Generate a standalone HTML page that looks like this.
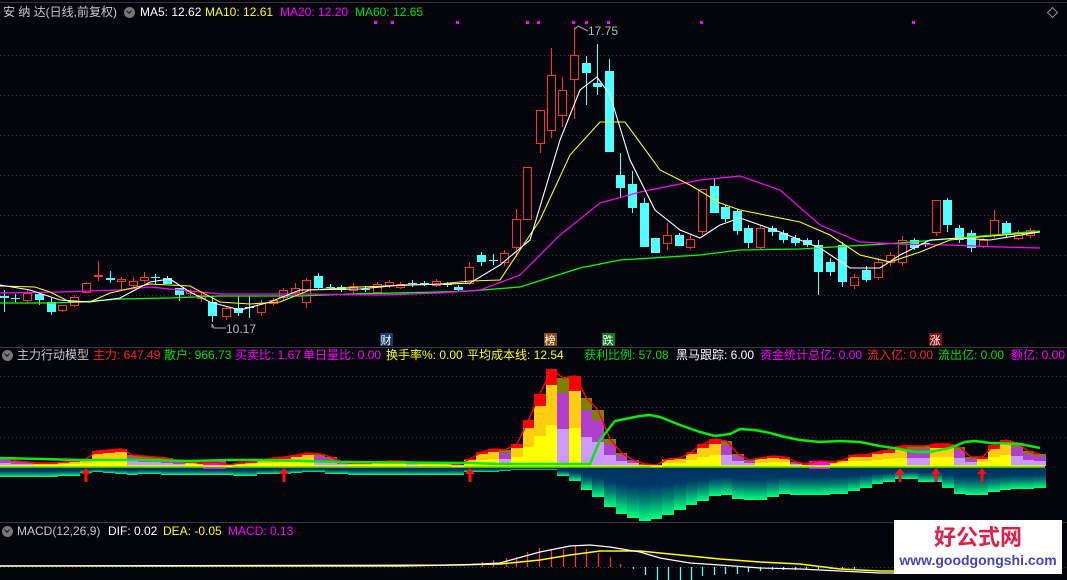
<!DOCTYPE html>
<html><head><meta charset="utf-8">
<style>
html,body{margin:0;padding:0;background:#04040d;}
#w{position:relative;width:1067px;height:580px;overflow:hidden;background:#04040d;font-family:"Liberation Sans","Noto Sans CJK SC",sans-serif;font-size:12px;}
.t{position:absolute;white-space:nowrap;line-height:14px;}
.ci{position:absolute;width:11px;height:11px;border-radius:50%;background:#777;}
.ci:after{content:"";position:absolute;left:3px;top:2px;width:3px;height:3px;border-right:1.5px solid #111;border-bottom:1.5px solid #111;transform:rotate(45deg);}
svg{position:absolute;left:0;top:0;}
</style></head><body><div id="w">
<svg id="s" width="1067" height="580" xmlns="http://www.w3.org/2000/svg">
<defs>
<linearGradient id="ng" x1="0" y1="0" x2="0" y2="1">
<stop offset="0" stop-color="#003060"/><stop offset="0.35" stop-color="#003a66"/><stop offset="0.6" stop-color="#007a70"/><stop offset="0.85" stop-color="#00d078"/><stop offset="1" stop-color="#00ff80"/>
</linearGradient>
</defs>
<g id="g"></g>
</svg>
<div class="t" style="left:3px;top:5px;color:#c8c8c8">安 纳 达(日线,前复权)</div>
<div class="ci" style="left:124px;top:7px"></div>
<div class="t" style="left:140px;top:5px;color:#fff">MA5: 12.62</div>
<div class="t" style="left:205px;top:5px;color:#ffff00">MA10: 12.61</div>
<div class="t" style="left:280px;top:5px;color:#ff00ff">MA20: 12.20</div>
<div class="t" style="left:355px;top:5px;color:#00e000">MA60: 12.65</div>
<div class="t" style="left:588px;top:24px;color:#b8b8b8">17.75</div>
<div class="t" style="left:226px;top:322px;color:#b8b8b8">10.17</div>

<div class="ci" style="left:2px;top:350px"></div>
<div class="t" style="left:17px;top:348px;color:#c8c8c8">主力行动模型</div>
<div class="t" style="left:93px;top:348px;color:#ff2020">主力: 647.49</div>
<div class="t" style="left:164px;top:348px;color:#00e000">散户: 966.73</div>
<div class="t" style="left:235px;top:348px;color:#ff00ff">买卖比: 1.67</div>
<div class="t" style="left:303px;top:348px;color:#ff00ff">单日量比: 0.00</div>
<div class="t" style="left:386px;top:348px;color:#ffff00">换手率%: 0.00</div>
<div class="t" style="left:467px;top:348px;color:#ffff00">平均成本线: 12.54</div>
<div class="t" style="left:584px;top:348px;color:#00e000">获利比例: 57.08</div>
<div class="t" style="left:676px;top:348px;color:#fff">黑马跟踪: 6.00</div>
<div class="t" style="left:760px;top:348px;color:#ff00ff">资金统计总亿: 0.00</div>
<div class="t" style="left:867px;top:348px;color:#ff2020">流入亿: 0.00</div>
<div class="t" style="left:938px;top:348px;color:#00e000">流出亿: 0.00</div>
<div class="t" style="left:1011px;top:348px;color:#ff00ff">额亿: 0.00</div>

<div class="ci" style="left:2px;top:526px"></div>
<div class="t" style="left:17px;top:524px;color:#c8c8c8">MACD(12,26,9)</div>
<div class="t" style="left:108px;top:524px;color:#fff">DIF: 0.02</div>
<div class="t" style="left:163px;top:524px;color:#ffff00">DEA: -0.05</div>
<div class="t" style="left:228px;top:524px;color:#ff00ff">MACD: 0.13</div>

<div style="position:absolute;left:894px;top:520px;width:168px;height:54px;background:#fff;"></div>
<div class="t" style="left:894px;top:522px;width:168px;text-align:center;color:#e0204a;font-size:22px;line-height:28px;font-weight:bold;font-family:'Noto Sans CJK SC',sans-serif;">好公式网</div>
<div class="t" style="left:894px;top:551px;width:168px;text-align:center;color:#4444c0;font-size:14px;line-height:18px;font-weight:bold;">www.goodgongshi.com</div>
</div>
<script>
var g=document.getElementById('g'),h='';
function L(x1,y1,x2,y2,c,w,d){h+='<line x1="'+x1+'" y1="'+y1+'" x2="'+x2+'" y2="'+y2+'" stroke="'+c+'" stroke-width="'+(w||1)+'"'+(d?' stroke-dasharray="'+d+'"':'')+'/>';}
function R(x,y,w,hh,f,s){h+='<rect x="'+x+'" y="'+y+'" width="'+w+'" height="'+Math.max(hh,1)+'" fill="'+f+'"'+(s?' stroke="'+s+'"':'')+'/>';}
function P(pts,c,w){h+='<polyline fill="none" stroke="'+c+'" stroke-width="'+(w||1)+'" points="'+pts+'"/>';}
// borders
L(0,2.5,1067,2.5,'#333');L(0,347.5,1067,347.5,'#3a3a3a');L(0,522.5,1067,522.5,'#3a3a3a');
[55,95,135,175,215,255,295].forEach(function(y){L(0,y+.5,1067,y+.5,'#3a3a3a',1,'1,3');});
[376,407,437].forEach(function(y){L(0,y+.5,1067,y+.5,'#3a3a3a',1,'1,3');});
L(0,567.5,1067,567.5,'#3a3a3a',1,'1,3');
h+='<rect x="1049" y="9" width="7" height="7" fill="none" stroke="#999" transform="rotate(45 1052.5 12.5)"/>';
[375,392,457,527,538,573,586,608,701,913].forEach(function(x){R(x-1,21,3,3,'#ff00ff');});
// candles [x,top,bot,wt,wb,c]
var C=[[4,296,298,290,312,'c'],[15,298,298,294,302,'c'],[27,293,300,289,303,'r'],[39,294,300,292,305,'c'],[51,302,312,298,315,'c'],[62,305,310,305,312,'r'],[74,297,305,295,307,'r'],[86,283,292,282,293,'r'],[98,275,276,261,281,'r'],[110,278,280,271,283,'c'],[121,279,281,277,290,'r'],[133,281,285,277,287,'r'],[144,277,280,272,283,'r'],[155,277,277,274,284,'c'],[167,278,284,276,284,'c'],[179,288,295,288,301,'c'],[190,291,293,289,297,'r'],[201,295,298,293,302,'r'],[212,302,316,296,322,'c'],[226,308,316,306,320,'r'],[238,308,313,296,316,'c'],[249,307,307,296,318,'c'],[261,303,312,300,316,'r'],[273,300,303,298,306,'r'],[283,290,297,288,300,'r'],[295,288,292,283,295,'r'],[306,280,302,278,308,'r'],[318,276,288,273,290,'c'],[330,287,287,284,290,'c'],[341,287,290,285,292,'c'],[353,286,290,283,295,'r'],[365,289,289,286,292,'c'],[377,284,292,282,294,'r'],[389,282,285,280,288,'r'],[400,284,287,282,289,'r'],[412,283,283,280,287,'c'],[424,283,283,281,286,'c'],[436,281,285,279,287,'r'],[447,284,284,282,287,'c'],[458,287,290,285,292,'c'],
[469,267,283,262,285,'r'],[481,255,262,252,266,'c'],[493,260,260,254,265,'c'],[504,253,262,250,266,'r'],[516,219,247,209,257,'r'],[527,167,219,167,219,'r'],[540,110,143,110,153,'r'],[551,75,130,48,138,'r'],[562,90,115,77,127,'r'],[574,55,79,27,119,'r'],[586,63,73,56,105,'c'],[597,83,87,44,95,'c'],[609,71,152,59,152,'c'],[620,175,188,153,198,'c'],[632,184,208,171,213,'c'],[644,203,247,198,247,'c'],[655,238,253,238,253,'c'],[667,235,243,223,250,'r'],[679,235,246,233,246,'c'],[690,239,247,235,249,'r'],[702,189,231,189,235,'r'],[714,186,213,178,213,'c'],[725,207,219,205,222,'c'],[737,211,231,209,235,'c'],[748,228,243,225,248,'c'],[760,228,247,225,250,'r'],[772,228,232,226,236,'c'],[783,233,240,230,243,'c'],[795,238,243,235,246,'c'],[807,240,245,238,247,'c'],[818,245,272,240,295,'c'],[830,262,272,258,276,'c'],[842,245,282,242,287,'c'],[854,277,285,274,289,'r'],[866,270,280,266,282,'c'],[878,262,277,258,280,'r'],[890,255,262,252,266,'r'],[902,240,262,236,266,'r'],[914,240,248,238,250,'c'],[925,243,245,241,247,'c'],[936,200,232,200,236,'r'],[947,200,225,198,232,'c'],[959,228,240,225,243,'c'],[971,233,248,230,252,'c'],[983,240,246,238,248,'r'],[994,220,235,210,238,'r'],[1006,223,235,221,237,'c'],[1018,232,238,230,240,'r'],[1030,230,235,228,238,'r']];
C.forEach(function(k){var col=k[5]=='r'?'#ff3030':'#50ffff';L(k[0]+.5,k[3],k[0]+.5,k[4],col);
if(k[5]=='r'){h+='<rect x="'+(k[0]-3.5)+'" y="'+(k[1]+.5)+'" width="8" height="'+Math.max(k[2]-k[1],1)+'" fill="#04040d" stroke="#ff3030"/>';}
else R(k[0]-4,k[1],9,k[2]-k[1]||1,'#50ffff');});
P('0,303 50,303 80,302 120,299 170,298 220,296 300,296 350,294 440,292 470,291 520,287 580,268 620,260 700,255 740,250 800,249 900,243 1040,231','#00ff00',1.3);
P('0,293 60,292 120,290 150,287 180,290 220,294 300,294 380,295 440,293 480,290 520,275 560,235 600,203 640,192 700,180 740,176 780,190 820,225 860,242 900,244 950,245 1000,247 1040,248','#ff00ff',1.2);
P('0,286 35,287 50,292 70,302 90,302 110,293 150,284 190,286 220,302 250,304 280,302 310,290 360,287 440,284 470,281 500,280 540,220 570,155 600,122 625,122 660,170 690,185 720,203 740,210 800,222 830,235 860,255 890,262 920,252 950,240 980,237 1040,232','#ffff00',1.1);
P('0,285 30,290 60,300 90,302 120,298 150,282 170,279 190,292 210,302 240,310 270,302 300,290 360,289 400,285 450,284 470,283 500,265 530,240 560,140 580,90 597,77 610,95 630,160 655,210 680,230 700,238 720,225 740,218 780,232 820,248 850,268 880,268 900,255 930,240 960,238 990,240 1040,232','#ffffff',1.1);
P('588,31 578,26 575,29','#aaa',1);P('226,328 214,328 212,324 212,328','#aaa',1);
// labels
function lab(x,t,bg){R(x-6,333,13,13,bg);h+='<text x="'+x+'" y="344" fill="#fff" font-size="11" text-anchor="middle" font-family="Noto Sans CJK SC,sans-serif">'+t+'</text>';}
lab(386,'财','#1a3a6a');lab(550,'榜','#8a4a10');lab(608,'跌','#107a20');lab(935,'涨','#801010');
// indicator bars
var B=[[0,10,458,477,'d'],[11,22,461,477,'d'],[23,33,462,477,'d'],[34,45,463,477,'u'],[46,57,463,477,'u'],[58,68,462,476,'u'],[69,79,461,476,'u'],[80,91,459,473,'u'],[92,102,451,472,'u'],[103,114,450,473,'u'],[115,126,449,474,'u'],[127,137,455,475,'d'],[138,148,456,474,'d'],[149,160,457,474,'d'],[161,172,458,475,'d'],[173,184,461,475,'d'],[185,196,462,475,'u'],[197,202,463,475,'u'],[203,225,462,475,'m'],[226,232,465,475,'u'],[233,244,463,476,'u'],[245,256,462,476,'u'],[257,267,460,474,'u'],[268,278,458,474,'u'],[279,290,457,474,'u'],[291,301,455,473,'u'],[302,313,453,472,'u'],[314,324,454,472,'d'],[325,336,457,474,'d'],[337,347,462,474,'d'],[348,359,463,475,'u'],[360,371,463,475,'u'],[372,382,462,475,'u'],[383,394,461,475,'u'],[395,405,461,475,'u'],[406,416,462,475,'d'],[417,428,463,475,'u'],[429,440,463,475,'u'],[441,451,463,475,'u'],[452,463,465,475,'u'],
[464,475,459,472,'u'],[476,487,452,472,'u'],[488,498,449,472,'u'],[499,510,450,471,'d'],[511,522,444,470,'u'],[523,533,420,470,'u'],[534,545,394,470,'u'],[546,556,369,470,'u'],[557,568,378,476,'d'],[569,580,376,481,'u'],[581,591,398,490,'d'],[592,603,410,497,'d'],[604,615,439,507,'d'],[616,626,453,514,'d'],[627,638,460,518,'d'],[639,650,464,521,'d'],[651,661,465,519,'u'],[662,673,459,515,'u'],[674,685,458,510,'u'],[686,696,452,505,'u'],[697,708,444,501,'u'],[709,720,439,496,'u'],[721,731,441,495,'d'],[732,743,454,499,'d'],[744,754,460,500,'d'],[755,766,458,500,'u'],[767,778,456,497,'u'],[779,789,457,494,'u'],[790,801,462,495,'d'],[802,808,464,495,'u'],[809,829,461,495,'m'],[830,836,462,494,'u'],[837,847,460,494,'u'],[848,859,455,491,'u'],[860,871,455,488,'u'],[872,882,452,484,'u'],[883,894,450,482,'u'],[895,906,446,479,'u'],[907,917,446,479,'d'],[918,929,446,482,'d'],[930,941,444,482,'u'],[942,953,444,488,'u'],[954,964,447,494,'d'],[965,976,457,495,'d'],[977,987,457,495,'u'],[988,999,445,492,'u'],[1000,1010,440,490,'u'],[1011,1022,443,489,'d'],[1023,1033,451,489,'d'],[1034,1045,454,488,'d']];
var red=[];
B.forEach(function(b){var x=b[0],w=b[1]-b[0]+1,t=b[2],base=466,H=base-t;
R(x,468,w,b[3]-468,'url(#ng)');
if(b[4]=='m'){R(x,461,w,8,'#ff00ff');}
else{var c=b[4]=='u'?['#ffff00','#ffcc10','#ff0000']:['#cc99ff','#b040cc','#808000'];
var h1=Math.round(H*0.42),h3=Math.max(1,Math.round(H*0.17)),h2=H-h1-h3;
R(x,base-h1,w,h1,c[0]);R(x,base-h1-h2,w,h2,c[1]);R(x,t,w,h3,c[2]);}
red.push((x+w/2)+','+t);});
P(red.join(' '),'#ff0000',1.5);
L(0,466,1045,466,'#ffff00',1.5);L(0,467.5,1045,467.5,'#00e000',1);
P('0,458 40,459 80,460 140,460 190,461 230,460 260,460 300,461 340,462 470,463 500,464 590,464 600,440 615,421 640,416 650,415 660,417 680,425 700,432 715,436 730,434 740,429 755,430 770,433 785,437 800,440 820,442 840,441 860,442 880,446 900,449 915,452 930,452 950,448 965,442 975,441 990,443 1020,444 1040,448','#00ee00',2.5);
[86,284,470,900,936,982].forEach(function(x){h+='<path d="M'+x+' 468 l-5 6 h3.5 v8 h3 v-8 h3.5z" fill="#ff1010"/>';});
// macd
[[482,562],[493,560],[506,558],[516,557],[527,552],[539,548],[551,550],[563,549],[575,546],[586,549],[598,553],[610,557],[620,564]].forEach(function(s){L(s[0]+.5,s[1],s[0]+.5,567,'#ff3030',1.3);});
[[633,569],[645,575],[657,580],[668,580],[680,580],[691,580],[702,576],[714,575],[725,574],[737,574],[748,572],[760,571],[772,570],[783,570],[795,570],[806,569],[818,569],[830,569],[842,569],[854,569]].forEach(function(s){L(s[0]+.5,567,s[0]+.5,s[1],'#50ffff',1.3);});
P('0,566 400,566 500,564 540,560 570,555 600,551 640,551 680,555 720,559 760,562 800,564 840,569 880,571 894,571','#ffff00',1.5);
P('0,566 463,565 500,563 540,552 570,546 590,545 610,547 640,552 660,558 690,563 720,565 760,568 800,569 840,571 880,573 894,573','#ffffff',1.2);
g.innerHTML=h;
</script>
</body></html>
